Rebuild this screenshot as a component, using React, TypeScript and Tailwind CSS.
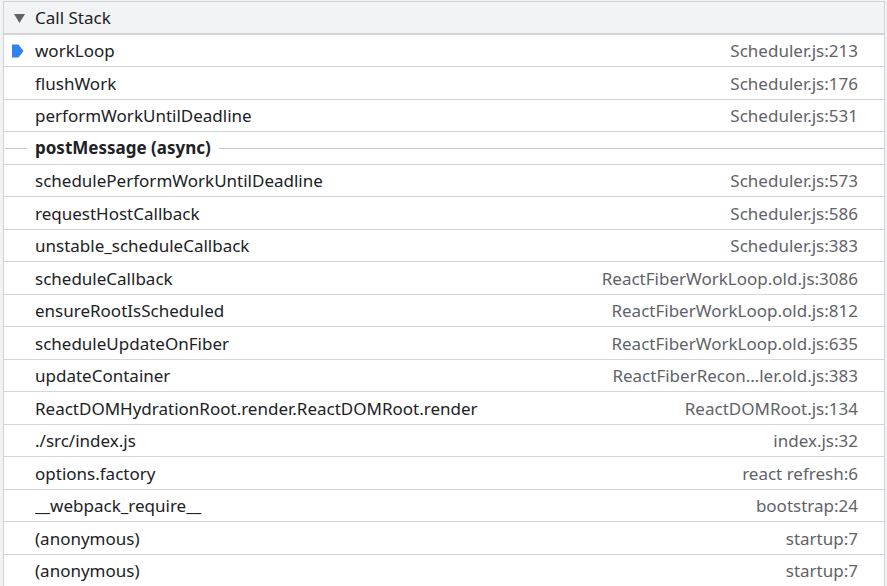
import { ReactNode } from 'react';

type Frame = { name: string; loc: string; current?: boolean };

const before: Frame[] = [
  { name: 'workLoop', loc: 'Scheduler.js:213', current: true },
  { name: 'flushWork', loc: 'Scheduler.js:176' },
  { name: 'performWorkUntilDeadline', loc: 'Scheduler.js:531' },
];

const after: Frame[] = [
  { name: 'schedulePerformWorkUntilDeadline', loc: 'Scheduler.js:573' },
  { name: 'requestHostCallback', loc: 'Scheduler.js:586' },
  { name: 'unstable_scheduleCallback', loc: 'Scheduler.js:383' },
  { name: 'scheduleCallback', loc: 'ReactFiberWorkLoop.old.js:3086' },
  { name: 'ensureRootIsScheduled', loc: 'ReactFiberWorkLoop.old.js:812' },
  { name: 'scheduleUpdateOnFiber', loc: 'ReactFiberWorkLoop.old.js:635' },
  { name: 'updateContainer', loc: 'ReactFiberRecon\u2026ler.old.js:383' },
  { name: 'ReactDOMHydrationRoot.render.ReactDOMRoot.render', loc: 'ReactDOMRoot.js:134' },
  { name: './src/index.js', loc: 'index.js:32' },
  { name: 'options.factory', loc: 'react refresh:6' },
  { name: '__webpack_require__', loc: 'bootstrap:24' },
  { name: '(anonymous)', loc: 'startup:7' },
  { name: '(anonymous)', loc: 'startup:7' },
];

function Row({ frame }: { frame: Frame }) {
  return (
    <div className="flex items-center h-[32.5px] border-b border-[#d3d5d9] pl-[31px] pr-[26px] pt-[2px]">
      <div className="w-[31px] -ml-[31px] flex items-center pl-[8px]">
        {frame.current && (
          <svg width="12" height="14" viewBox="0 0 12 14">
            <path d="M0 0.5h6.5l5 6.5-5 6.5H0z" fill="#3281f0" />
          </svg>
        )}
      </div>
      <span className="flex-1 truncate text-[#202124] leading-[22px]">{frame.name}</span>
      <span className="text-[#5f6368] whitespace-nowrap leading-[22px]">{frame.loc}</span>
    </div>
  );
}

function AsyncRow({ children }: { children: ReactNode }) {
  return (
    <div className="flex items-center h-[32.5px] border-b border-[#d3d5d9] pt-[1px]">
      <div className="w-[22px] ml-px h-px bg-[#c4c7cc]" />
      <span className="px-[8px] font-bold text-[#202124] leading-[22px]">{children}</span>
      <div className="flex-1 h-px bg-[#c4c7cc]" />
    </div>
  );
}

export default function App() {
  return (
    <div
      className="w-[887px] h-[586px] overflow-hidden bg-[#f1f3f4] pl-[3px] pt-px pr-[2px] text-[17px]"
      style={{ fontFamily: '"Segoe UI", "Noto Sans", "Open Sans", sans-serif' }}
    >
      <div className="h-full bg-white border-l border-t border-r border-[#cfd1d5]">
        <div className="flex items-center h-[32.5px] bg-[#f1f3f4] border-b-2 border-[#d3d5d9] pl-[10px] pt-[2px]">
          <svg width="11" height="9" viewBox="0 0 11 9" className="mr-[10px]">
            <path d="M0 0h11L5.5 9z" fill="#5f6368" />
          </svg>
          <span className="text-[#202124] leading-[22px]">Call Stack</span>
        </div>
        {before.map((f, i) => (
          <Row key={'b' + i} frame={f} />
        ))}
        <AsyncRow>postMessage (async)</AsyncRow>
        {after.map((f, i) => (
          <Row key={'a' + i} frame={f} />
        ))}
      </div>
    </div>
  );
}
